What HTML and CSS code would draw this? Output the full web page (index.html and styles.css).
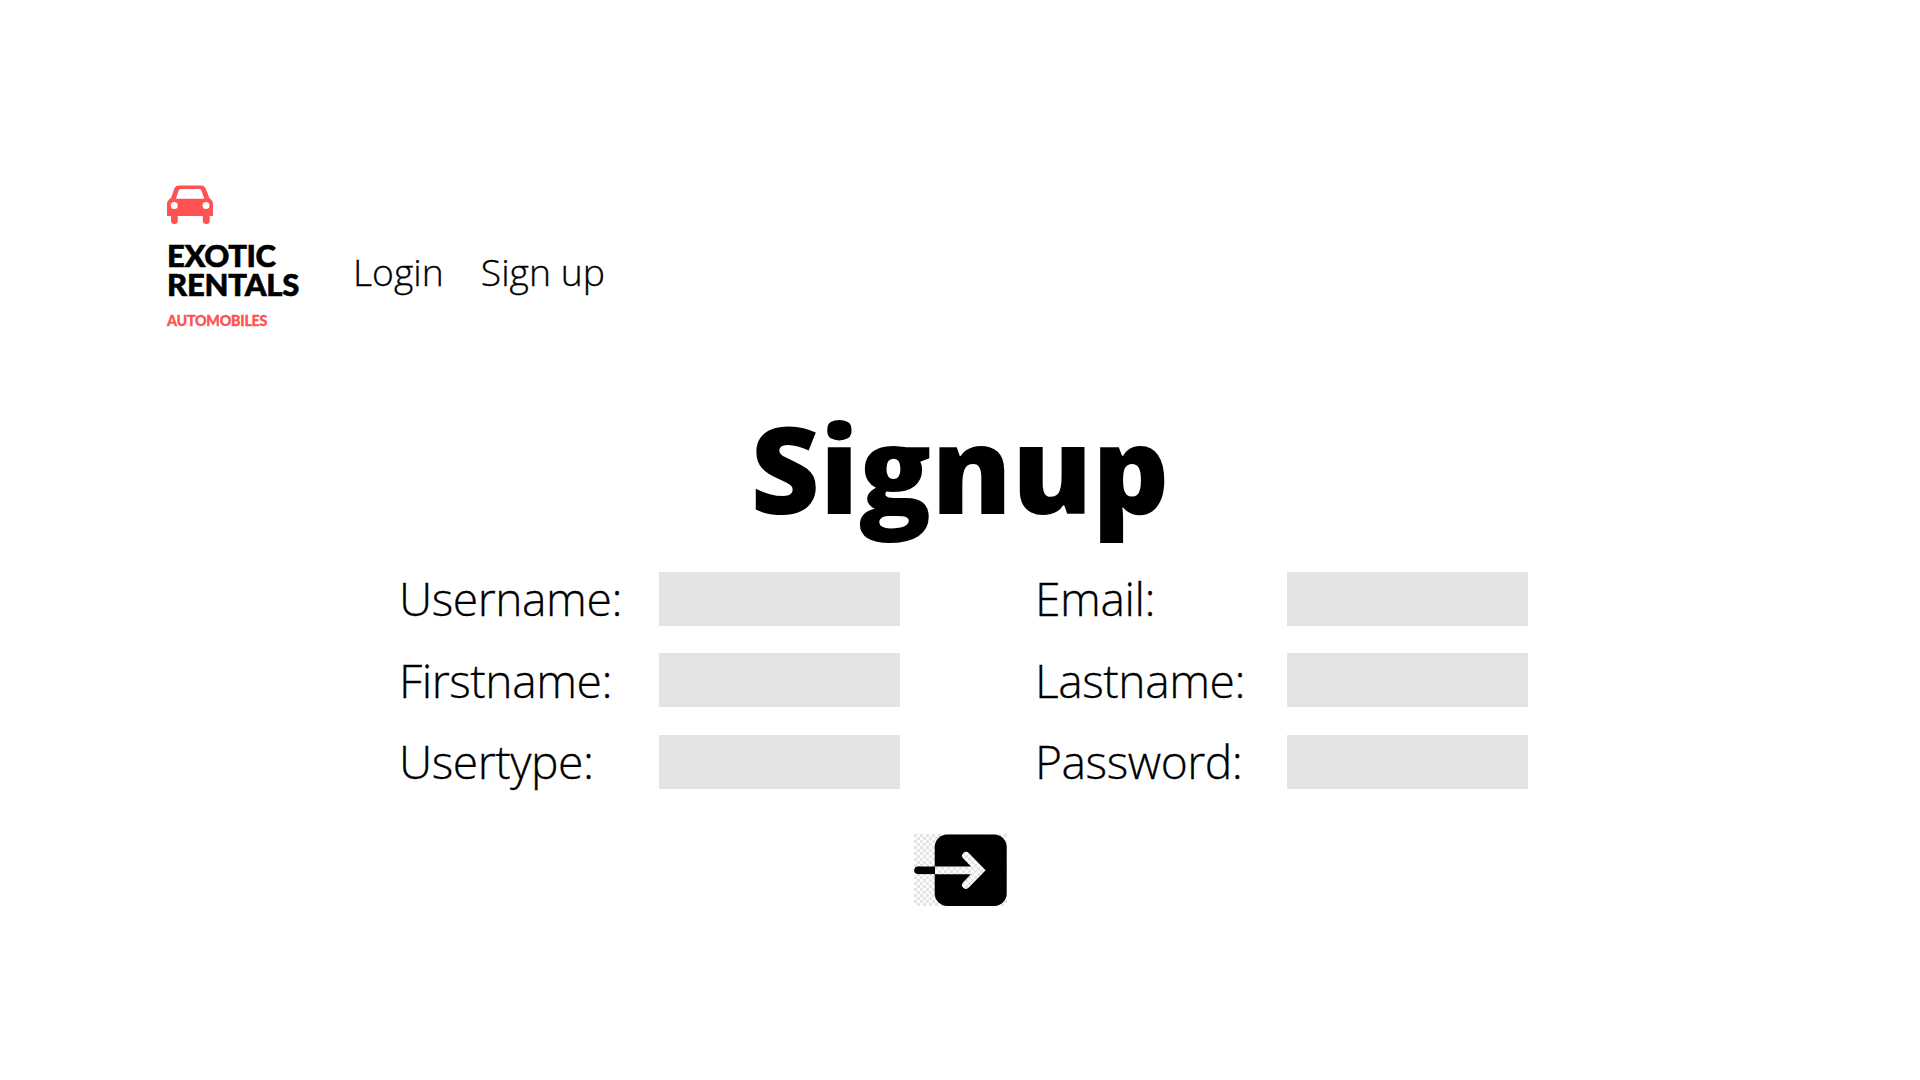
FILE: index.html
```html
<!DOCTYPE html>
<html lang="en">
<head>
<meta charset="utf-8">
<title>Exotic Rentals – Signup</title>
<link rel="stylesheet" href="styles.css">
</head>
<body>
<header class="header">
  <div class="logo">
    <svg class="car" viewBox="0 0 46 39" aria-hidden="true">
      <path fill="#ff5252" fill-rule="evenodd" d="M12 .5H34Q37.500 .5 38.700 3.500L42.300 13Q46 15.500 46 19V31H42.700V35.500Q42.700 39 39.200 39Q35.800 39 35.800 35.500V31H10.800V35.500Q10.800 39 7.400 39Q4 39 4 35.500V31H0V19Q0 15.500 4 13L7.400 3.500Q8.500 .5 12 .5ZM13.500 4Q12.300 4 11.900 5L8.900 13.700H37.300L34.200 5Q33.800 4 32.600 4ZM7.300 17A3.500 3.500 0 1 0 7.300 24A3.500 3.500 0 1 0 7.300 17ZM39 17A3.500 3.500 0 1 0 39 24A3.500 3.500 0 1 0 39 17Z"/>
    </svg>
    <div class="brand"><span class="exotic">EXOTIC</span><span class="rentals">RENTALS</span></div>
    <div class="tagline">AUTOMOBILES</div>
  </div>
  <nav class="nav"><a>Login</a><a>Sign up</a></nav>
</header>
<main>
  <h1 class="title">Signup</h1>
  <form class="form">
    <div class="column">
      <label for="username">Username:</label><input id="username" type="text">
      <label for="firstname">Firstname:</label><input id="firstname" type="text">
      <label for="usertype">Usertype:</label><input id="usertype" type="text">
    </div>
    <div class="column column-right">
      <label for="email">Email:</label><input id="email" type="text">
      <label for="lastname">Lastname:</label><input id="lastname" type="text">
      <label for="password">Password:</label><input id="password" type="password">
    </div>
  </form>
  <button class="submit" type="button" aria-label="Submit">
    <svg viewBox="0 0 93 72" width="93" height="72">
      <defs>
        <pattern id="checks" width="6" height="6" patternUnits="userSpaceOnUse">
          <rect width="6" height="6" fill="#fdfdfd"/>
          <path fill="#e4e4e4" d="M0 0h3v3H0zM3 3h3v3H3z"/>
        </pattern>
        <clipPath id="tile"><rect x="21" y="0" width="72" height="72"/></clipPath>
      </defs>
      <rect width="93" height="72" fill="url(#checks)"/>
      <rect x="20.700" y=".5" width="72" height="71.500" rx="12.500"/>
      <path d="M4 36.300H21" stroke="#000" stroke-width="7.600"/><circle cx="4" cy="36.300" r="3.800"/>
      <path clip-path="url(#tile)" d="M15 36.300H66M52 21.800L66.200 36.300L52 50.900" fill="none" stroke="url(#checks)" stroke-width="7.800" stroke-linecap="round"/>
    </svg>
  </button>
</main>
</body>
</html>
```
FILE: styles.css
```css
* { box-sizing: border-box; }
body {
  margin: 0;
  min-height: 1080px;
  padding-top: 185px;
  background: #fff;
  color: #000;
  font-family: "Open Sans", sans-serif;
}
.header { display: flex; height: 219px; padding-left: 167px; }
.logo { width: 186px; font-family: Lato, sans-serif; font-weight: 900; }
.car { display: block; width: 46px; height: 39px; }
.brand {
  display: flex;
  flex-direction: column;
  padding-top: 17px;
  font-size: 31px;
  line-height: 29px;
  -webkit-text-stroke: 0.6px #000;
}
.exotic { letter-spacing: -0.4px; }
.rentals { letter-spacing: -0.2px; }
.tagline {
  margin-top: 13px;
  color: #ff5252;
  font-size: 14.3px;
  line-height: 18px;
  letter-spacing: -0.25px;
  -webkit-text-stroke: 0.3px #ff5252;
}
.nav {
  display: flex;
  gap: 37px;
  padding-top: 61px;
  font-size: 37.3px;
  font-weight: 300;
  line-height: 51px;
  -webkit-text-stroke: 0.3px #000;
}
.title { margin: 0; height: 168px; font-size: 120px; font-weight: 800; line-height: 127px; text-align: center; }
.form { display: flex; gap: 136px; padding-left: 399px; }
.column {
  display: grid;
  grid-template-columns: 260px 240px;
  grid-auto-rows: 54px;
  row-gap: 27.3px;
  font-size: 46.2px;
  font-weight: 300;
  line-height: 54px;
  letter-spacing: -0.45px;
  -webkit-text-stroke: 0.3px #000;
}
.column-right { grid-template-columns: 251.500px 240px; }
.column label { padding-top: 0.3px; }
.column input { width: 241px; height: 54px; padding: 0 10px; border: 0; background: #e4e4e4; font: inherit; }
.submit { display: block; margin: 45px 0 0 914px; padding: 0; border: 0; background: none; }
.submit svg { display: block; }
```
